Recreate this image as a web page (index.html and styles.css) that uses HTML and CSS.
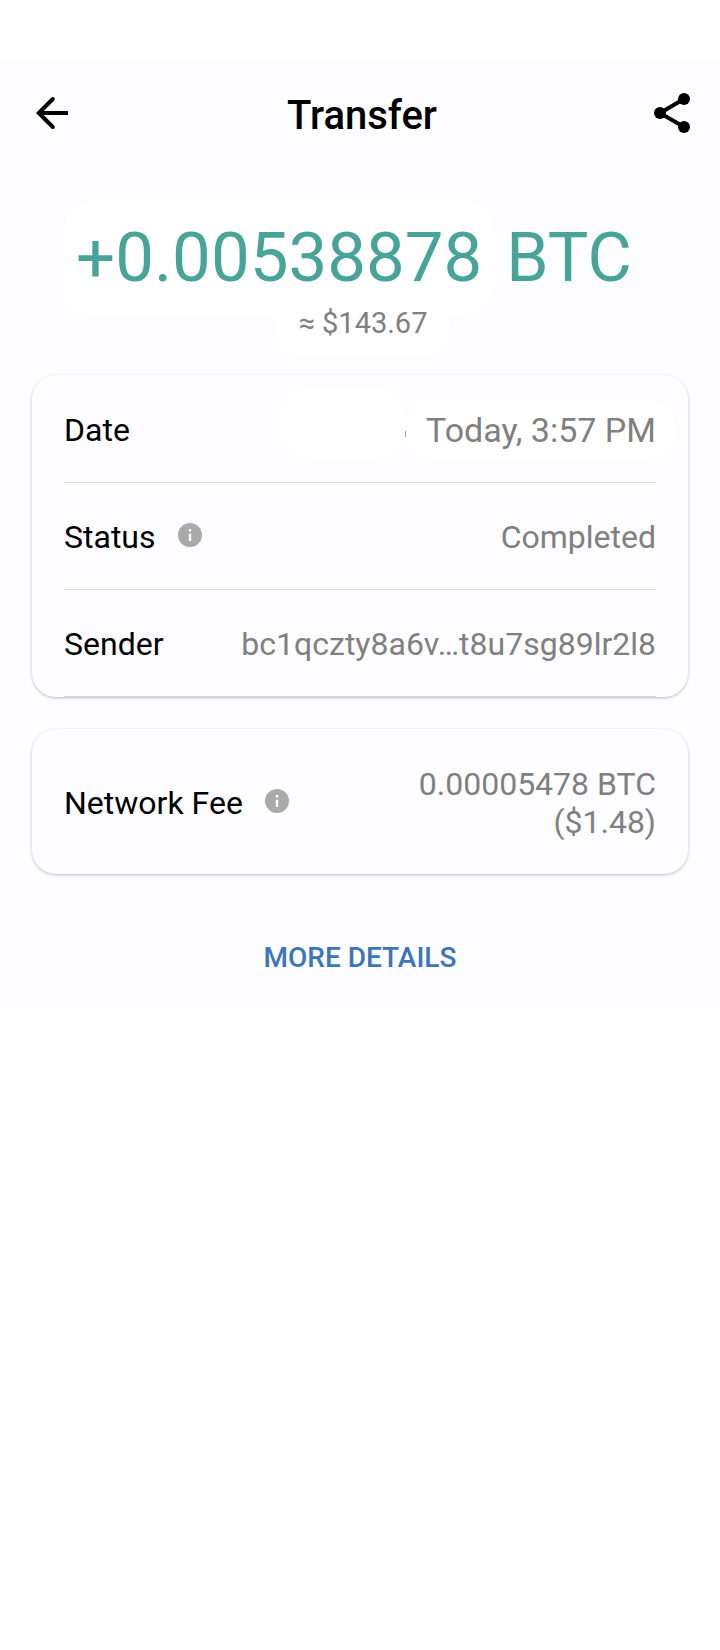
FILE: index.html
```html
<!DOCTYPE html>
<html lang="en">

<head>
    <meta charset="UTF-8">
    <meta name="viewport" content="width=device-width, initial-scale=1.0">
    <title>Transfer</title>
    <link rel="stylesheet" href="styles.css">
</head>

<body>
    <div class="screen">
        <!-- top bar -->
        <header class="topbar">
            <button class="icon-btn" type="button" aria-label="Back">
                <svg width="48" height="48" viewBox="0 0 24 24" fill="none" stroke="#000" stroke-width="2">
                    <path d="M5.4 12H20" />
                    <path d="M12.4 5L5.4 12l7 7" stroke-linecap="round" />
                </svg>
            </button>
            <h1>Transfer</h1>
            <button class="icon-btn" type="button" aria-label="Share">
                <svg width="48" height="48" viewBox="0 0 24 24">
                    <path d="M18 5L6 12l12 7" fill="none" stroke="#000" stroke-width="2" />
                    <circle cx="18" cy="5" r="3" />
                    <circle cx="6" cy="12" r="3" />
                    <circle cx="18" cy="19" r="3" />
                </svg>
            </button>
        </header>

        <main>
            <!-- amount -->
            <div class="summary">
                <div class="amount">
                    <span class="amount-value">+0.00538878</span>
                    <span class="amount-unit">BTC</span>
                </div>
                <div class="fiat">≈ $143.67</div>
            </div>

            <!-- transfer info -->
            <dl class="card">
                <div class="row">
                    <dt>Date</dt>
                    <dd class="date">
                        <span class="date-blank"></span>
                        <span class="date-mark"></span>
                        <span class="date-value">Today, 3:57 PM</span>
                    </dd>
                </div>
                <div class="row">
                    <dt>Status
                        <button class="info" type="button" aria-label="About status">
                            <svg width="24" height="24" viewBox="2 2 20 20" fill="#aaaaaa">
                                <path d="M12 2a10 10 0 1 0 0 20a10 10 0 0 0 0-20zm1 15h-2v-6h2v6zm0-8h-2V7h2v2z" />
                            </svg>
                        </button>
                    </dt>
                    <dd>Completed</dd>
                </div>
                <div class="row">
                    <dt>Sender</dt>
                    <dd>bc1qczty8a6v…t8u7sg89lr2l8</dd>
                </div>
            </dl>

            <!-- fee -->
            <dl class="card">
                <div class="row row-fee">
                    <dt>Network Fee
                        <button class="info" type="button" aria-label="About network fee">
                            <svg width="24" height="24" viewBox="2 2 20 20" fill="#aaaaaa">
                                <path d="M12 2a10 10 0 1 0 0 20a10 10 0 0 0 0-20zm1 15h-2v-6h2v6zm0-8h-2V7h2v2z" />
                            </svg>
                        </button>
                    </dt>
                    <dd>0.00005478 BTC<br>($1.48)</dd>
                </div>
            </dl>

            <button class="more" type="button">MORE DETAILS</button>
        </main>
    </div>
</body>

</html>
```

FILE: styles.css
```css
* {
    box-sizing: border-box;
}

body {
    margin: 0;
    padding-top: 61px;
    background: #fff;
    color: #000;
    font-family: Roboto, sans-serif;
    font-size: 32px;
    line-height: 38px;
}

button {
    margin: 0;
    padding: 0;
    border: 0;
    background: none;
    font-family: inherit;
    cursor: pointer;
}

svg {
    display: block;
}

.screen {
    background: #fdfdff;
}

/* top bar */
.topbar {
    display: flex;
    align-items: center;
    justify-content: space-between;
    height: 104px;
    padding: 0 24px 0 28px;
}

h1 {
    margin: 0;
    padding-top: 6px;
    font-size: 40px;
    font-weight: 500;
    line-height: 48px;
}

/* amount */
.summary {
    display: flex;
    flex-direction: column;
    align-items: center;
    padding: 36px 58px 18px 64px;
}

.amount {
    display: flex;
    align-items: baseline;
    align-self: flex-start;
    gap: 12px;
    color: #48a398;
    white-space: nowrap;
}

.amount-value {
    padding: 0 12px;
    border-radius: 32px;
    background: #fff;
    font-size: 69px;
    line-height: 114px;
}

.amount-unit {
    font-size: 68px;
}

.fiat {
    padding: 0 22px 26px;
    border-radius: 0 0 28px 28px;
    background: #fff;
    color: #808080;
    font-size: 29px;
    line-height: 16px;
}

/* cards */
.card {
    margin: 0 32px 32px;
    padding: 1px 32px 0;
    border-radius: 24px;
    box-shadow: 0 1px 3px rgba(0, 0, 0, 0.25);
    background: #fdfdff;
}

.row {
    display: flex;
    align-items: center;
    justify-content: space-between;
    height: 107px;
    padding-top: 2px;
    border-bottom: 1px solid #d9d9dc;
}

.row-fee {
    height: 144px;
    border-bottom: 0;
}

dt {
    display: flex;
    align-items: center;
    gap: 22px;
}

dd {
    margin: 0;
    color: #808080;
    text-align: right;
}

.info {
    margin-bottom: 4px;
}

.date {
    display: flex;
    align-items: flex-end;
    margin: 0 -20px 14px 0;
}

.date-blank {
    width: 124px;
    height: 71px;
    border-radius: 32px;
    background: #fff;
}

.date-mark {
    width: 1px;
    height: 6px;
    margin-bottom: 22px;
    background: #aaa;
}

.date-value {
    padding: 0 20px;
    border-radius: 28px;
    background: #fff;
    font-size: 34px;
    line-height: 58px;
}

.more {
    display: block;
    margin: 0 auto;
    padding: 32px 24px;
    color: #3a76b9;
    font-size: 28px;
    font-weight: 500;
    line-height: 40px;
}
```
